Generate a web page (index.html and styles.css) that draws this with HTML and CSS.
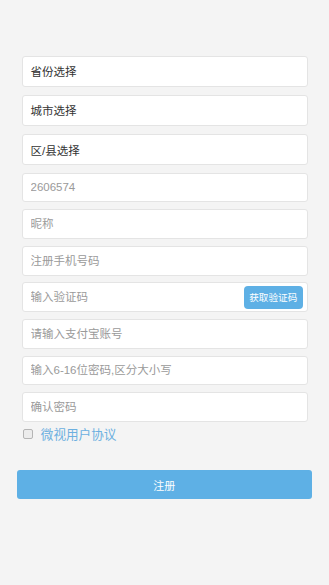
FILE: index.html
```html
<!DOCTYPE html>
<html lang="zh-CN">
<head>
<meta charset="utf-8">
<title>注册</title>
<link rel="stylesheet" href="styles.css">
</head>
<body>
<form class="form">
  <div class="selects">
    <div class="select">省份选择</div>
    <div class="select">城市选择</div>
    <div class="select">区/县选择</div>
  </div>
  <div class="inputs">
    <div class="field"><input class="input" type="text" placeholder="2606574"></div>
    <div class="field"><input class="input" type="text" placeholder="昵称"></div>
    <div class="field"><input class="input" type="text" placeholder="注册手机号码"></div>
    <div class="field"><input class="input" type="text" placeholder="输入验证码"><button type="button" class="code-btn">获取验证码</button></div>
    <div class="field"><input class="input" type="text" placeholder="请输入支付宝账号"></div>
    <div class="field"><input class="input" type="password" placeholder="输入6-16位密码,区分大小写"></div>
    <div class="field"><input class="input" type="password" placeholder="确认密码"></div>
  </div>
  <label class="agree"><span class="check"></span><span class="agree-text">微视用户协议</span></label>
  <button type="button" class="submit">注册</button>
</form>
</body>
</html>
```
FILE: styles.css
```css
html, body {
  margin: 0;
  padding: 0;
  background: #f4f4f4;
  font-family: "Liberation Sans", "Noto Sans CJK SC", sans-serif;
}
.form {
  display: flex;
  flex-direction: column;
  padding-top: 55.5px;
}
.selects {
  display: flex;
  flex-direction: column;
  gap: 8.3px;
  margin: 0 21.5px;
}
.select {
  height: 31px;
  box-sizing: border-box;
  background: #fff;
  border: 1px solid #e4e4e4;
  border-radius: 3px;
  padding: 0 8px;
  display: flex;
  align-items: center;
  font-size: 11.5px;
  color: #333;
}
.inputs {
  display: flex;
  flex-direction: column;
  gap: 6.8px;
  margin: 7.5px 21.5px 0;
}
.field {
  height: 29.8px;
  box-sizing: border-box;
  background: #fff;
  border: 1px solid #e4e4e4;
  border-radius: 3px;
  display: flex;
  align-items: center;
}
.input {
  flex: 1;
  min-width: 0;
  height: 100%;
  border: 0;
  outline: none;
  background: transparent;
  padding: 0 8px;
  font-family: inherit;
  font-size: 11.5px;
  color: #555;
}
.input::placeholder {
  color: #9a9a9a;
}
.code-btn {
  flex: none;
  height: 22.6px;
  width: 59.5px;
  margin-right: 3.5px;
  padding: 0;
  border: 0;
  border-radius: 4px;
  background: #5eb0e5;
  color: #fff;
  font-family: inherit;
  font-size: 9.6px;
}
.agree {
  display: flex;
  align-items: center;
  margin: 4px 0 0 23.3px;
  height: 16px;
}
.check {
  width: 9.5px;
  height: 9.5px;
  box-sizing: border-box;
  border: 1px solid #b5b5b5;
  border-radius: 2px;
  background: #ececec;
}
.agree-text {
  margin-left: 8px;
  font-size: 12.6px;
  color: #6cb0e0;
}
.submit {
  margin: 28.5px 17px 0 16.7px;
  height: 29px;
  border: 0;
  border-radius: 3px;
  background: #5eb0e5;
  color: #fff;
  font-family: inherit;
  font-size: 11px;
  padding: 0;
}
```
